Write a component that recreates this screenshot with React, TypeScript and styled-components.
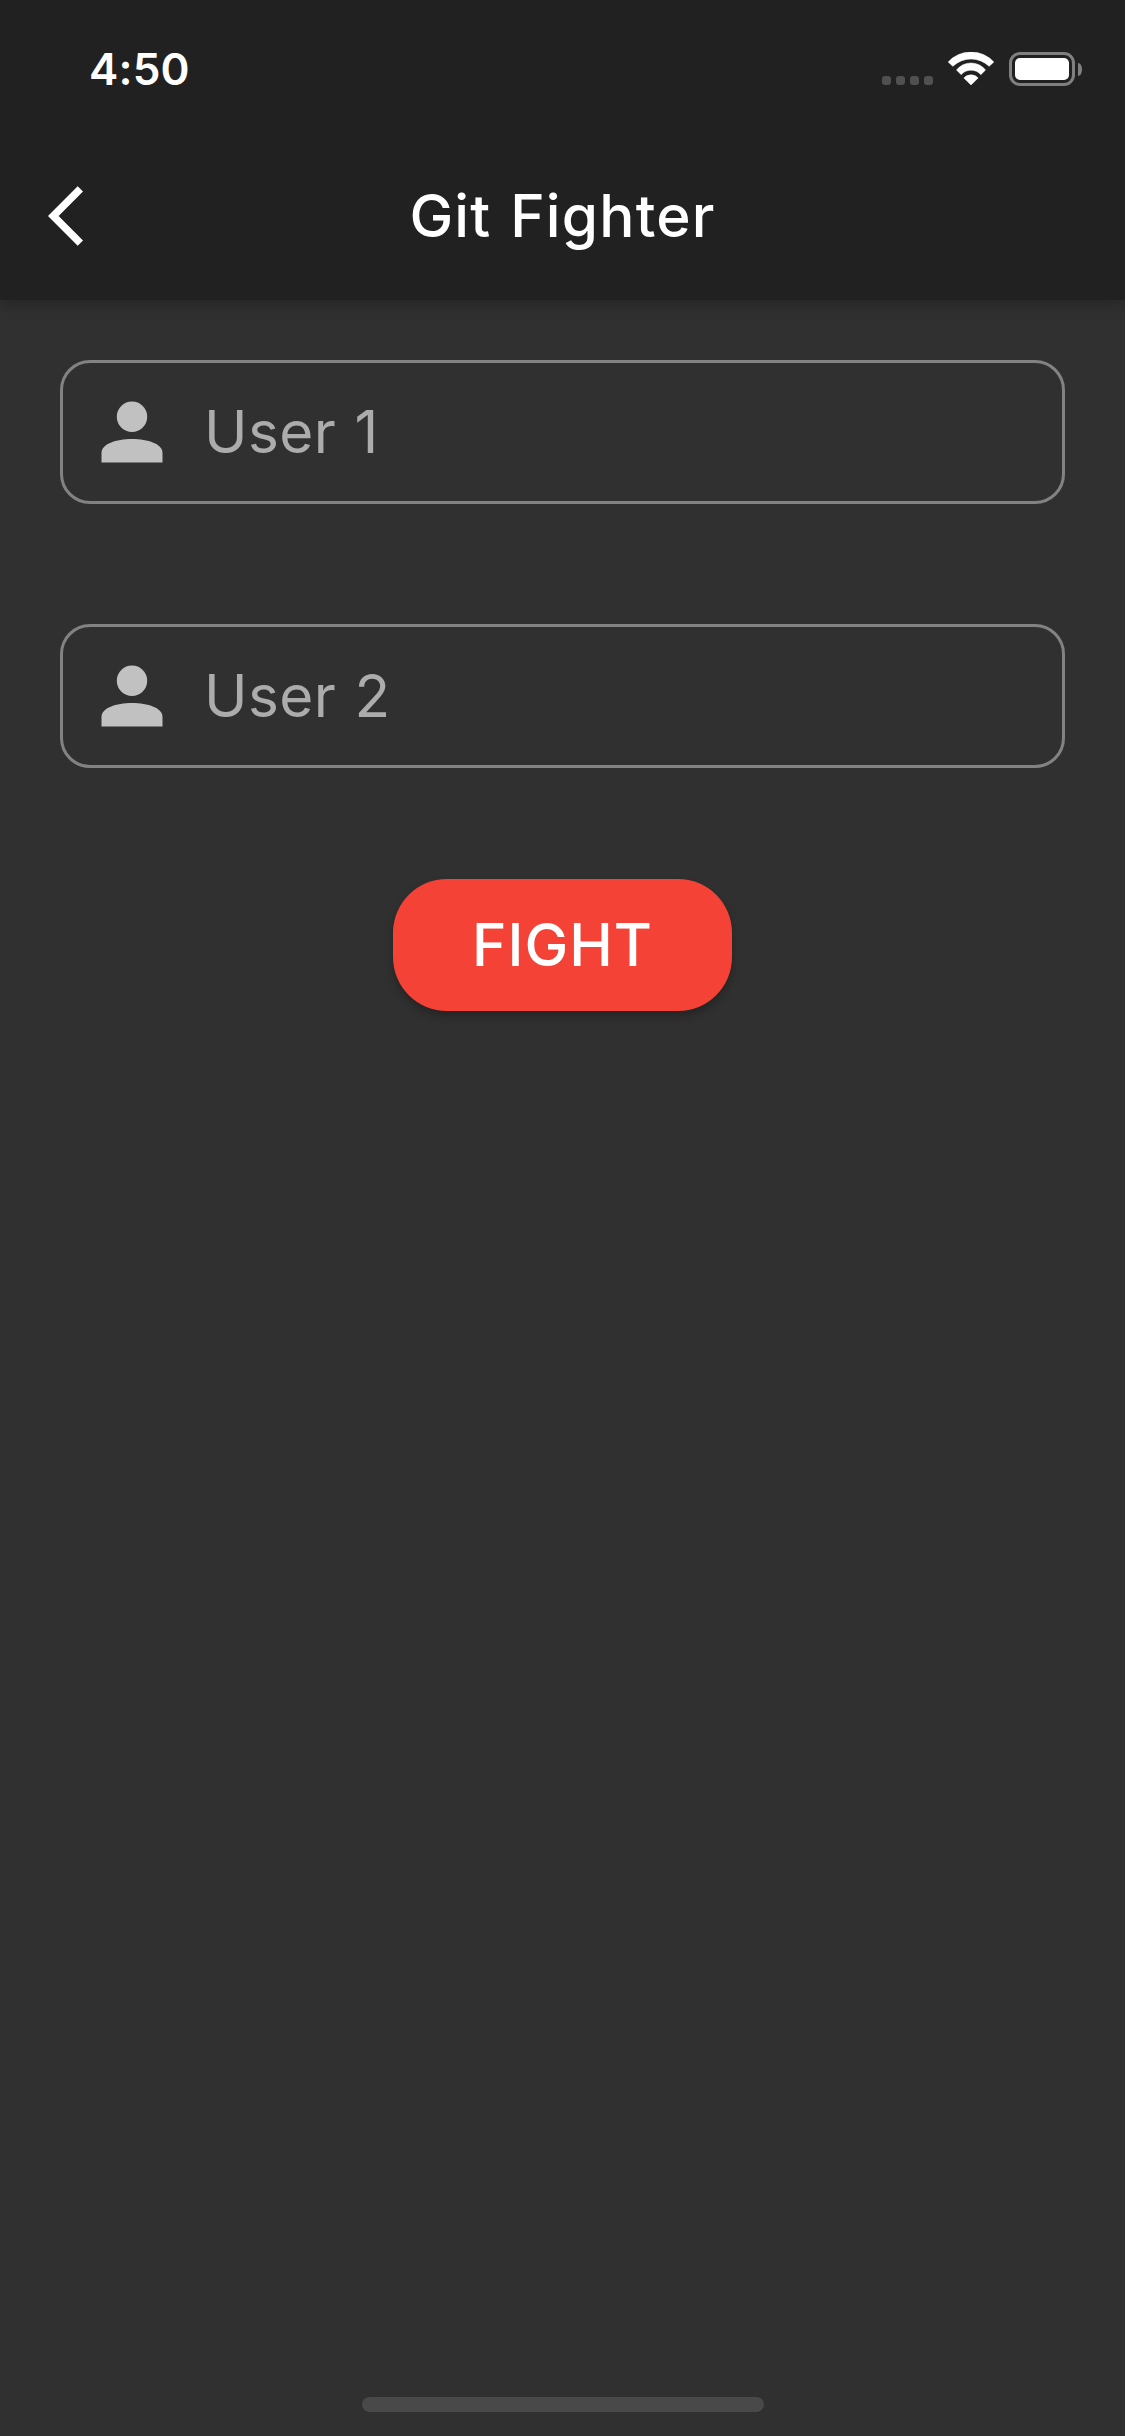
import React from "react";
import styled, { createGlobalStyle } from "styled-components";

const GlobalStyle = createGlobalStyle`
  *, *::before, *::after { box-sizing: border-box; }
  body { margin: 0; background: #303030; }
`;

const Screen = styled.div`
  display: flex;
  flex-direction: column;
  width: 1125px;
  height: 2436px;
  overflow: hidden;
  background: #303030;
  color: #fff;
  font-family: Inter, "Liberation Sans", sans-serif;
`;

const Header = styled.header`
  display: flex;
  flex-direction: column;
  flex: none;
  height: 300px;
  background: #212121;
  box-shadow: 0 3px 15px rgba(0, 0, 0, 0.26);
`;

const StatusBar = styled.div`
  display: flex;
  align-items: center;
  justify-content: space-between;
  height: 138px;
  padding: 0 43px 0 89px;
`;

const Time = styled.span`
  font-size: 44px;
  font-weight: 600;
  line-height: 56px;
  letter-spacing: 0.2px;
`;

const Indicators = styled.div`
  display: flex;
  align-items: center;
`;

const Signal = styled.div`
  display: flex;
  gap: 5px;
  margin: 23px 15px 0 0;
`;

const SignalDot = styled.i`
  width: 9px;
  height: 9px;
  border-radius: 3px;
  background: #505050;
`;

const WifiIcon = styled.svg`
  width: 46px;
  height: 33px;
  margin: 0 15px 1px 0;
`;

const Battery = styled.div`
  width: 66px;
  height: 34px;
  padding: 3px;
  border: 3px solid #808080;
  border-radius: 11px;
`;

const Charge = styled.div`
  height: 22px;
  border-radius: 5px;
  background: #fff;
`;

const BatteryCap = styled.div`
  width: 4px;
  height: 13px;
  margin-left: 3px;
  border-radius: 0 4px 4px 0 / 0 6px 6px 0;
  background: #808080;
`;

const NavBar = styled.nav`
  display: grid;
  grid-template-columns: 168px 1fr 168px;
  align-items: center;
  height: 156px;
`;

const BackButton = styled.button`
  display: flex;
  padding: 0 0 0 48px;
  border: 0;
  background: none;
  color: #fff;
`;

const BackIcon = styled.svg`
  width: 72px;
  height: 72px;
`;

const Title = styled.h1`
  margin: 0;
  font-size: 58.5px;
  font-weight: 500;
  line-height: 72px;
  text-align: center;
  letter-spacing: 1.2px;
  word-spacing: 2px;
`;

const Form = styled.main`
  display: flex;
  flex: 1;
  flex-direction: column;
  align-items: center;
  padding: 60px 60px 0;
`;

const Field = styled.label`
  display: flex;
  align-items: center;
  width: 100%;
  height: 144px;
  margin-bottom: 120px;
  padding-left: 38px;
  border: 3px solid #828282;
  border-radius: 30px;
`;

const PersonIcon = styled.svg`
  width: 62px;
  height: 62px;
  margin-right: 41px;
  fill: #c1c1c1;
`;

const Placeholder = styled.span`
  color: #acacac;
  font-size: 58.5px;
  font-weight: 400;
  line-height: 72px;
  letter-spacing: 0.4px;
  word-spacing: 1.5px;
`;

const FightButton = styled.button`
  width: 339px;
  height: 132px;
  margin-top: -9px;
  padding: 0;
  border: 0;
  border-radius: 54px;
  background: #f44336;
  box-shadow: 0 5px 8px rgba(0, 0, 0, 0.26);
  color: #fff;
  font-family: inherit;
  font-size: 58.5px;
  font-weight: 500;
  line-height: 72px;
  letter-spacing: 1px;
`;

const HomeIndicator = styled.div`
  align-self: center;
  flex: none;
  width: 402px;
  height: 15px;
  margin-bottom: 24px;
  border-radius: 8px;
  background: #494949;
`;

function UserField({ label }: { label: string }) {
  return (
    <Field>
      <PersonIcon viewBox="0 0 62 62">
        <circle cx="31" cy="15.7" r="15.2" />
        <path d="M.5 61.5V52C.5 43 15 38 31 38S61.5 43 61.5 52v9.5z" />
      </PersonIcon>
      <Placeholder>{label}</Placeholder>
    </Field>
  );
}

export default function App() {
  return (
    <Screen>
      <GlobalStyle />
      <Header>
        <StatusBar>
          <Time>4:50</Time>
          <Indicators>
            <Signal>
              {[0, 1, 2, 3].map((dot) => (
                <SignalDot key={dot} />
              ))}
            </Signal>
            <WifiIcon viewBox="0 0 137 99" fill="#fff" stroke="#fff" strokeWidth="1.5" strokeLinejoin="round">
              <path d="M0 30A93 93 0 0 1 137 30L123 43A78.5 78.5 0 0 0 14 43Z" />
              <path d="M25 54A55.5 55.5 0 0 1 112 54L98 68A39 39 0 0 0 39 68Z" />
              <path d="M47 78A29 29 0 0 1 90 78L68.5 99Z" />
            </WifiIcon>
            <Battery>
              <Charge />
            </Battery>
            <BatteryCap />
          </Indicators>
        </StatusBar>
        <NavBar>
          <BackButton aria-label="Back">
            <BackIcon viewBox="0 0 24 24" fill="currentColor">
              <path d="M11.67 3.87 9.9 2.1 0 12l9.9 9.9 1.77-1.77L3.54 12z" />
            </BackIcon>
          </BackButton>
          <Title>Git Fighter</Title>
        </NavBar>
      </Header>
      <Form>
        <UserField label="User 1" />
        <UserField label="User 2" />
        <FightButton>FIGHT</FightButton>
      </Form>
      <HomeIndicator />
    </Screen>
  );
}
